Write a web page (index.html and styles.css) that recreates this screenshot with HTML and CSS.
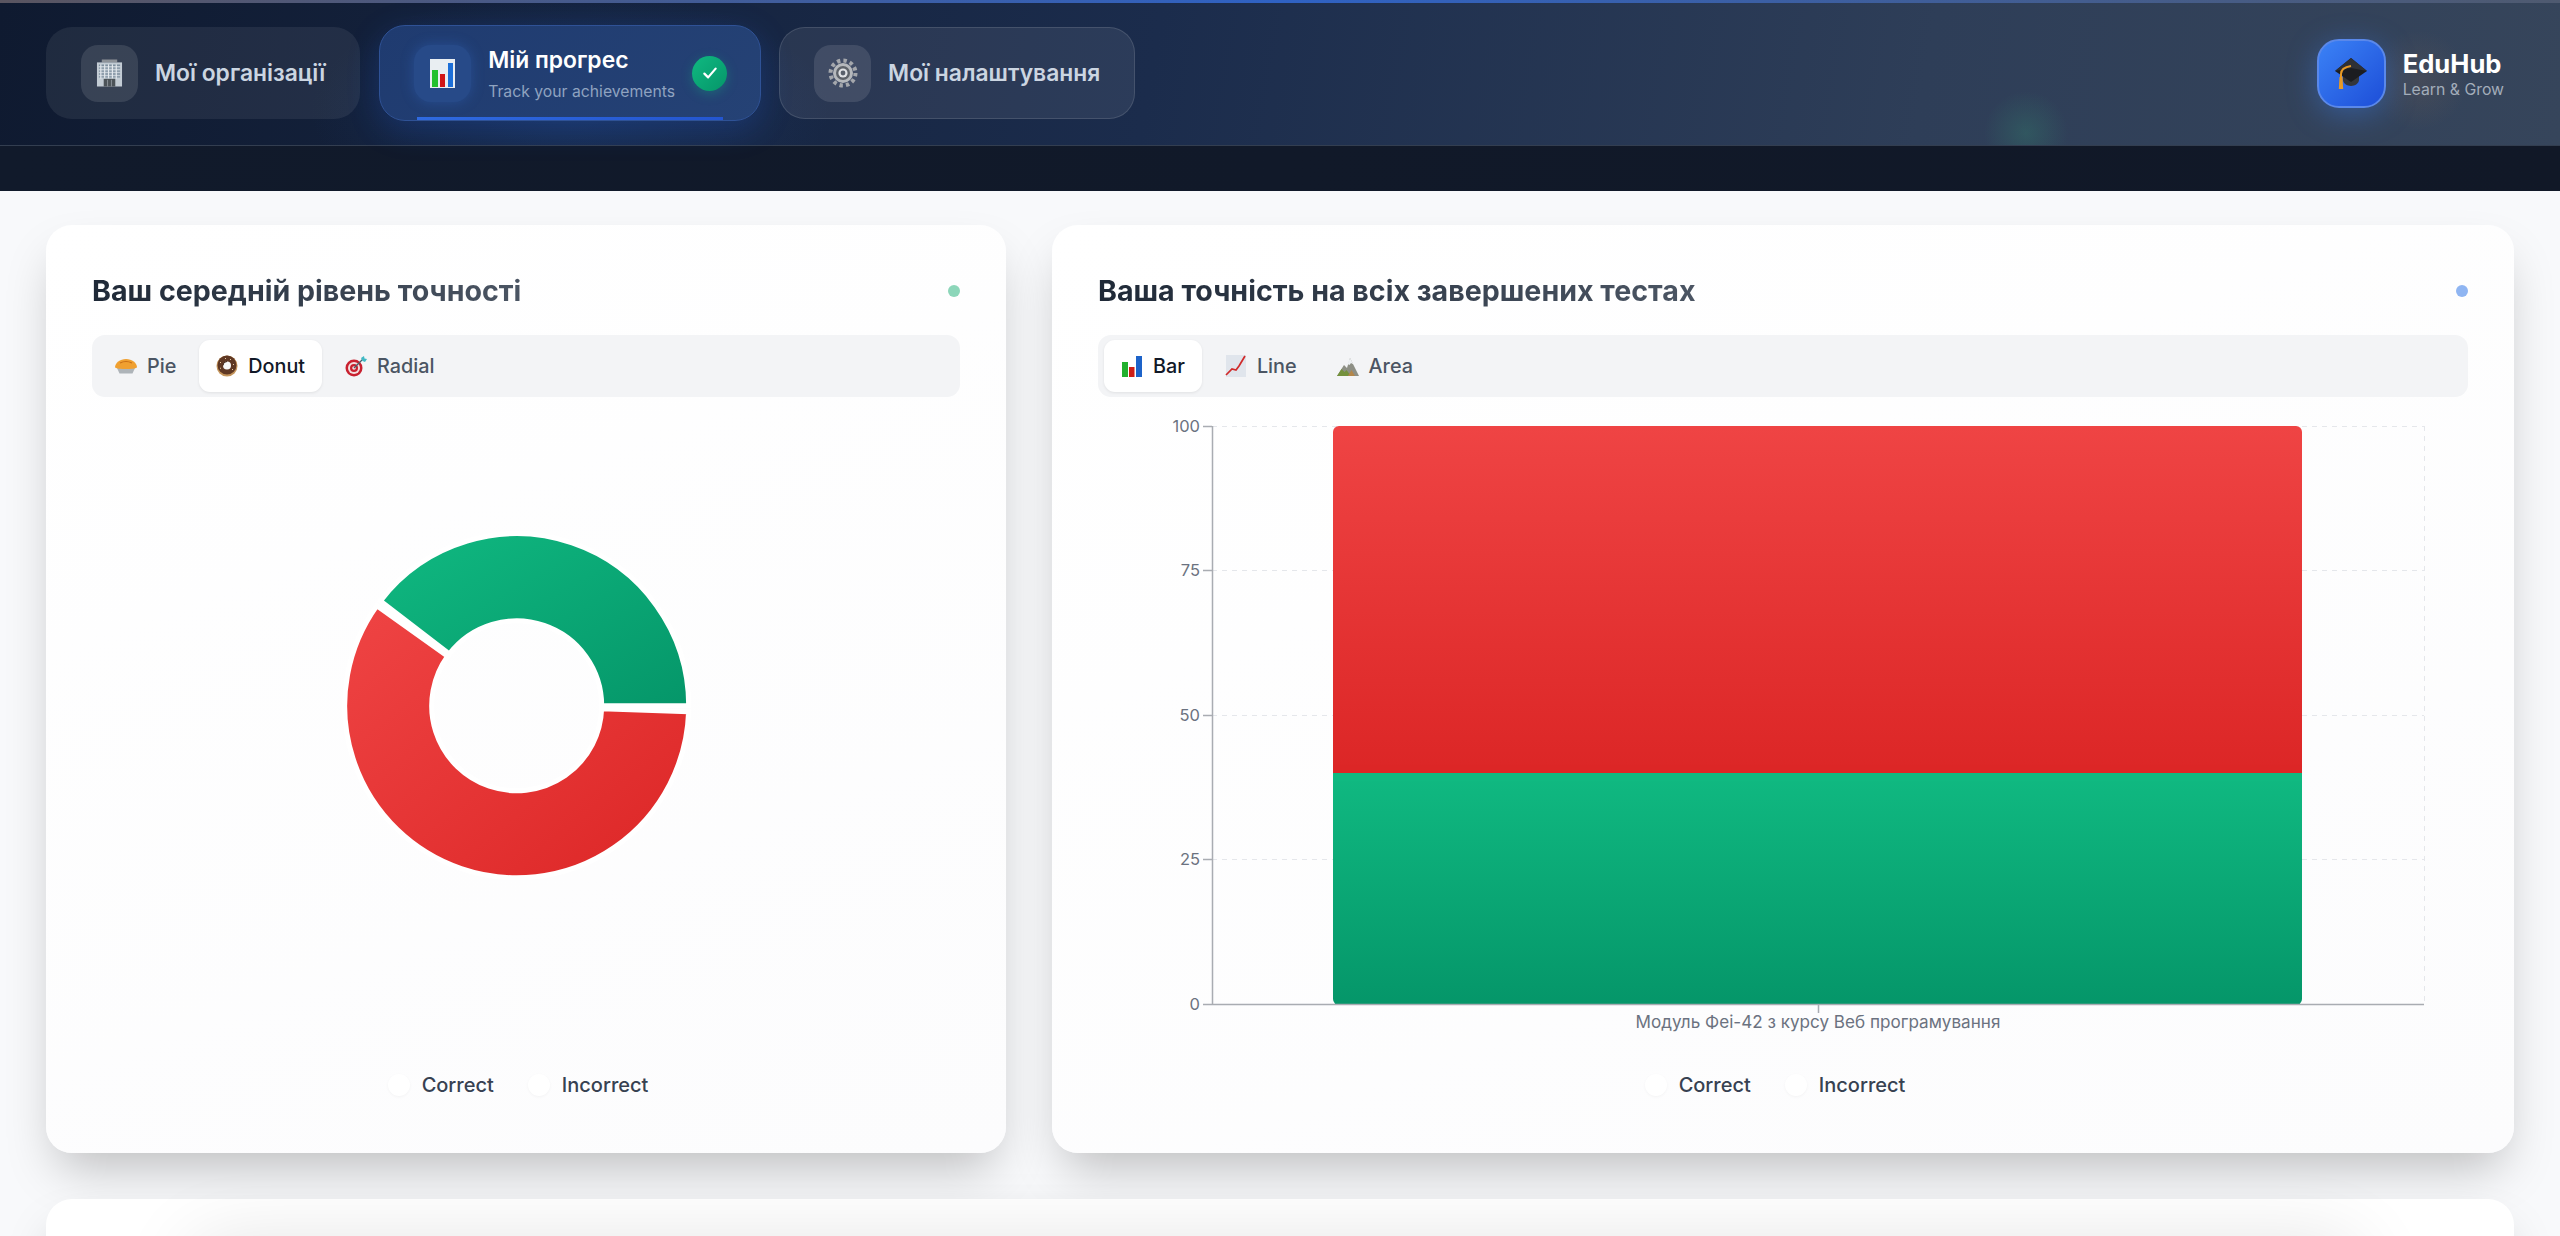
FILE: index.html

```html
<!DOCTYPE html>
<html lang="uk">
<head>
    <meta charset="UTF-8">
    <meta name="viewport" content="width=device-width, initial-scale=1.0">
    <title>EduHub</title>
    <link rel="stylesheet" href="styles.css">
</head>
<body>
    <header class="topbar">
        <nav class="nav">
            <a class="nav-item nav-plain">
                <span class="nav-tile">
                    <svg class="ico-building" viewBox="0 0 28 28">
                        <rect x="6" y="0" width="16" height="3" fill="#8d9298"/>
                        <rect x="1" y="3" width="26" height="25" fill="#c3ccd4"/>
                        <path d="M3 6h22M3 9h22M3 12h22M3 15h22M3 18h22" stroke="#7f8f9e" stroke-width="1.4"/>
                        <path d="M5 5v15M9 5v15M13 5v15M17 5v15M21 5v15" stroke="#e4e9ee" stroke-width="1.2"/>
                        <rect x="8" y="20" width="12" height="8" fill="#4c5358"/>
                        <path d="M12 21v7M16 21v7" stroke="#8b9399" stroke-width="1"/>
                    </svg>
                </span>
                <span class="nav-label">Мої організації</span>
            </a>
            <a class="nav-item nav-active">
                <span class="nav-tile">
                    <svg class="ico-chart" viewBox="0 0 25 29">
                        <rect width="25" height="29" fill="#e9eef2"/>
                        <rect x="2" y="11" width="6" height="17" fill="#22c02e"/>
                        <rect x="10" y="15" width="5" height="13" fill="#d11616"/>
                        <rect x="18" y="4" width="5" height="24" fill="#1d6fd8"/>
                    </svg>
                </span>
                <span class="nav-text">
                    <span class="nav-label">Мій прогрес</span>
                    <span class="nav-sub">Track your achievements</span>
                </span>
                <span class="nav-check">
                    <svg viewBox="0 0 16 16"><path d="M3.5 8.5l3 3 6-7" fill="none" stroke="#fff" stroke-width="1.8" stroke-linecap="round" stroke-linejoin="round"/></svg>
                </span>
                <span class="nav-bar"></span>
            </a>
            <a class="nav-item nav-line">
                <span class="nav-tile">
                    <svg class="ico-gear" viewBox="0 0 30 30">
                        <circle cx="15" cy="15" r="12.5" fill="none" stroke="#a4a7ac" stroke-width="4" stroke-dasharray="3.4 3.15"/>
                        <circle cx="15" cy="15" r="10" fill="#b5b8bc"/>
                        <circle cx="15" cy="15" r="7" fill="#5d6269"/>
                        <circle cx="15" cy="15" r="4.6" fill="#dfe1e4"/>
                        <circle cx="15" cy="15" r="2.4" fill="#59606b"/>
                    </svg>
                </span>
                <span class="nav-label">Мої налаштування</span>
            </a>
        </nav>
        <div class="brand">
            <span class="brand-tile">
                <svg class="ico-cap" viewBox="0 0 32 32">
                    <path d="M8 15v8c0 3 4 6 8 6s8-3 8-6v-8z" fill="#33363b"/>
                    <path d="M16 1l16 13-16 11L0 14z" fill="#1c1d20"/>
                    <path d="M16 1l16 13-16-3-16 3z" fill="#2e3035"/>
                    <path d="M16 9C9 10 6 13 6 17v9" fill="none" stroke="#e79a26" stroke-width="2"/>
                    <path d="M4.5 20h3l.7 12H3.800z" fill="#e79a26"/>
                </svg>
            </span>
            <span class="brand-text">
                <span class="brand-name">EduHub</span>
                <span class="brand-sub">Learn &amp; Grow</span>
            </span>
        </div>
    </header>
    <div class="strip"></div>

    <main class="content">
        <div class="charts">
            <section class="card">
                <div class="card-head">
                    <h2 class="card-title">Ваш середній рівень точності</h2>
                    <span class="dot dot-green"></span>
                </div>
                <div class="tabs">
                    <button class="tab">
                        <svg class="tab-ico" viewBox="0 0 22 22">
                            <path d="M1.500 12h19l-3 6.500h-13z" fill="#aeb4b9"/>
                            <path d="M0 12.500C0 8 5 4 11 4s11 4 11 8.500c-3 2-19 2-22 0z" fill="#f0a030"/>
                            <path d="M5 8c4-2 8-2 12 0" fill="none" stroke="#c96f16" stroke-width="1.200"/>
                        </svg>
                        <span>Pie</span>
                    </button>
                    <button class="tab tab-on">
                        <svg class="tab-ico" viewBox="0 0 22 22">
                            <circle cx="11" cy="11" r="10.500" fill="#c4955c"/>
                            <circle cx="11" cy="10" r="9.500" fill="#5f3824"/>
                            <circle cx="11" cy="10.500" r="4" fill="#f8f8f8"/>
                            <path d="M11 6.500a4 4 0 0 0-4 4" fill="none" stroke="#3d2012" stroke-width="1"/>
                            <path d="M4 7l1 1M9 3l1 1M15 4l-1 1M18 9l-1 1M4 13l1 .5M16 14l1 1" stroke="#e7c9a0" stroke-width="1"/>
                        </svg>
                        <span>Donut</span>
                    </button>
                    <button class="tab">
                        <svg class="tab-ico" viewBox="0 0 22 22">
                            <circle cx="9" cy="13" r="8.500" fill="#c8202f"/>
                            <circle cx="9" cy="13" r="6" fill="#f3dede"/>
                            <circle cx="9" cy="13" r="4" fill="#c8202f"/>
                            <circle cx="9" cy="13" r="1.800" fill="#f3dede"/>
                            <path d="M9 13L18 4" stroke="#47606b" stroke-width="1.300"/>
                            <path d="M16 3l3-2 .5 2.500 2.500.5-2 3-2.500-1z" fill="#3fb8c4"/>
                        </svg>
                        <span>Radial</span>
                    </button>
                </div>
                <svg class="chart" width="868" height="630" viewBox="0 0 868 630">
                    <defs>
                        <linearGradient id="pieGreen" x1="0" y1="0" x2="1" y2="1">
                            <stop offset="0" stop-color="#10b981"/>
                            <stop offset="1" stop-color="#059669"/>
                        </linearGradient>
                        <linearGradient id="pieRed" x1="0" y1="0" x2="1" y2="1">
                            <stop offset="0" stop-color="#ef4444"/>
                            <stop offset="1" stop-color="#dc2626"/>
                        </linearGradient>
                    </defs>
                    <path d="M596.700 295.800A172 172 0 0 0 288.400 190.900L357.400 243.900A85 85 0 0 1 509.700 295.800Z" fill="url(#pieGreen)" stroke="#fff" stroke-width="5"/>
                    <path d="M284.800 195.700A172 172 0 1 0 596.600 301.800L509.650 298.770A85 85 0 1 1 355.600 246.300Z" fill="url(#pieRed)" stroke="#fff" stroke-width="5"/>
                </svg>
                <div class="legend">
                    <span class="legend-item"><i class="legend-dot"></i>Correct</span>
                    <span class="legend-item"><i class="legend-dot"></i>Incorrect</span>
                </div>
            </section>

            <section class="card">
                <div class="card-head">
                    <h2 class="card-title">Ваша точність на всіх завершених тестах</h2>
                    <span class="dot dot-blue"></span>
                </div>
                <div class="tabs">
                    <button class="tab tab-on">
                        <svg class="tab-ico" viewBox="0 0 22 22">
                            <rect x="1" y="7" width="6" height="15" fill="#22b02e"/>
                            <rect x="8" y="12" width="5.500" height="10" fill="#cf1e16"/>
                            <rect x="15" y="1" width="6" height="21" fill="#1d63c9"/>
                        </svg>
                        <span>Bar</span>
                    </button>
                    <button class="tab">
                        <svg class="tab-ico" viewBox="0 0 22 22">
                            <rect x="1" y="0" width="20" height="22" fill="#e0e5ec"/>
                            <path d="M1 20l6-6 4 1 3-4 6-10" fill="none" stroke="#d02a2a" stroke-width="1.700"/>
                        </svg>
                        <span>Line</span>
                    </button>
                    <button class="tab">
                        <svg class="tab-ico" viewBox="0 0 22 22">
                            <path d="M0 21l7-11 3 3 3-10 9 18z" fill="#8d8f85"/>
                            <path d="M10.500 9l2.500-6 3.500 6.500-2.500-1.500-1.500 2z" fill="#eef1f4"/>
                            <path d="M0 21l4.500-7 3 3 2-2 4.500 6z" fill="#74913d"/>
                            <path d="M11 21l3.500-6 3.500 6z" fill="#b3864a"/>
                        </svg>
                        <span>Area</span>
                    </button>
                </div>
                <svg class="chart" width="1370" height="630" viewBox="0 0 1370 630">
                    <defs>
                        <linearGradient id="barRed" x1="0" y1="0" x2="0" y2="1">
                            <stop offset="0" stop-color="#ef4444"/>
                            <stop offset="1" stop-color="#dc2626"/>
                        </linearGradient>
                        <linearGradient id="barGreen" x1="0" y1="0" x2="0" y2="1">
                            <stop offset="0" stop-color="#10b981"/>
                            <stop offset="1" stop-color="#059669"/>
                        </linearGradient>
                    </defs>
                    <path class="grid-line" d="M114 16.500H1326M114 160.500H1326M114 305.500H1326M114 449.500H1326M1326.500 16V594"/>
                    <rect x="235" y="363" width="969" height="232" rx="6" fill="url(#barGreen)"/>
                    <rect x="235" y="16" width="969" height="347" rx="6" fill="url(#barRed)"/>
                    <rect x="235" y="355" width="969" height="8" fill="#dc2626"/>
                    <rect x="235" y="363" width="969" height="8" fill="#10b981"/>
                    <path class="axis-line" d="M114.500 16V595M114 594.500H1326M105 16.500H114M105 160.500H114M105 305.500H114M105 449.500H114M105 594.500H114M720.500 595V603"/>
                    <text class="tick" x="102" y="22">100</text>
                    <text class="tick" x="102" y="166">75</text>
                    <text class="tick" x="102" y="311">50</text>
                    <text class="tick" x="102" y="455">25</text>
                    <text class="tick" x="102" y="600">0</text>
                    <text class="tick-x" x="720" y="618">Модуль Феі-42 з курсу Веб програмування</text>
                </svg>
                <div class="legend">
                    <span class="legend-item"><i class="legend-dot"></i>Correct</span>
                    <span class="legend-item"><i class="legend-dot"></i>Incorrect</span>
                </div>
            </section>
        </div>

        <section class="card card-next">
            <div class="card-next-body"></div>
        </section>
    </main>
</body>
</html>
```

FILE: styles.css

```css
html, body {
    margin: 0;
    padding: 0;
    height: 100%;
    overflow: hidden;
}

body {
    background: #f8f9fb;
    font-family: Inter, "Noto Sans", sans-serif;
}

/* top bar */
.topbar {
    box-sizing: border-box;
    height: 146px;
    padding: 1px 46px 0;
    display: flex;
    justify-content: space-between;
    align-items: center;
    border-bottom: 1px solid #333e50;
    background:
        linear-gradient(90deg, #5a5560, #2f62c4 50%, #4f5a70) top / 100% 3px no-repeat,
        radial-gradient(circle 42px at 2026px 133px, rgba(52, 130, 110, 0.35), transparent),
        radial-gradient(circle 50px at 2418px 80px, rgba(190, 130, 80, 0.12), transparent),
        radial-gradient(ellipse 260px 120px at 570px 110px, rgba(40, 90, 170, 0.25), transparent),
        linear-gradient(100deg, #0f1a30 0%, #1b2c4c 45%, #2e3e58 75%, #36455b 100%);
}

.nav {
    display: flex;
    align-items: center;
    gap: 18px;
}

.nav-item {
    box-sizing: border-box;
    position: relative;
    height: 92px;
    padding: 0 34px;
    display: flex;
    align-items: center;
    gap: 17px;
    border-radius: 26px;
}

.nav-plain {
    padding: 0 35px;
    margin-right: 1px;
    background: rgba(255, 255, 255, 0.07);
}

.nav-line {
    background: rgba(255, 255, 255, 0.08);
    border: 1px solid rgba(255, 255, 255, 0.12);
}

.nav-active {
    height: 96px;
    padding-right: 33px;
    background: linear-gradient(135deg, #1f3b70, #254275);
    border: 1px solid #2f5296;
    box-shadow: 0 8px 32px rgba(37, 99, 235, 0.22);
}

.nav-tile {
    width: 57px;
    height: 57px;
    border-radius: 17px;
    background: rgba(255, 255, 255, 0.11);
    display: flex;
    align-items: center;
    justify-content: center;
    flex-shrink: 0;
}

.nav-active .nav-tile {
    background: #274a88;
    box-shadow: 0 0 14px rgba(59, 130, 246, 0.25);
}

.ico-building {
    width: 27px;
    height: 28px;
}

.ico-chart {
    width: 25px;
    height: 29px;
}

.ico-gear {
    width: 30px;
    height: 30px;
}

.nav-label {
    font-size: 22.85px;
    font-weight: 600;
    color: #cbd5e1;
    white-space: nowrap;
}

.nav-text {
    display: flex;
    flex-direction: column;
    gap: 8px;
}

.nav-active .nav-label {
    color: #fff;
}

.nav-sub {
    font-size: 15.75px;
    color: #8fa3c0;
    white-space: nowrap;
}

.nav-check {
    width: 35px;
    height: 35px;
    border-radius: 50%;
    background: linear-gradient(135deg, #10b981, #059669);
    box-shadow: 0 3px 12px rgba(16, 185, 129, 0.3);
    display: flex;
    align-items: center;
    justify-content: center;
}

.nav-check svg {
    width: 20px;
    height: 20px;
}

.nav-bar {
    position: absolute;
    left: 37px;
    right: 37px;
    bottom: 0;
    height: 3px;
    background: linear-gradient(90deg, #2f6ae0, #2456d0);
}

.brand {
    display: flex;
    align-items: center;
    gap: 17px;
    margin-right: 10px;
}

.brand-tile {
    box-sizing: border-box;
    width: 69px;
    height: 69px;
    border-radius: 22px;
    background: linear-gradient(135deg, #3b82f6, #1d4ed8);
    border: 2px solid #5a88ea;
    box-shadow: 0 6px 30px rgba(59, 130, 246, 0.4);
    display: flex;
    align-items: center;
    justify-content: center;
}

.ico-cap {
    width: 32px;
    height: 32px;
}

.brand-text {
    display: flex;
    flex-direction: column;
    gap: 1px;
}

.brand-name {
    font-size: 25.6px;
    font-weight: 700;
    color: #fff;
}

.brand-sub {
    font-size: 15.8px;
    color: #a3adba;
}

.strip {
    height: 45px;
    background: linear-gradient(90deg, #111a2b, #111827);
}

/* page content */
.content {
    padding: 34px 46px 0;
    display: flex;
    flex-direction: column;
    gap: 46px;
}

.charts {
    display: grid;
    grid-template-columns: 960px 1fr;
    gap: 46px;
}

.card {
    box-sizing: border-box;
    height: 928px;
    padding: 46px;
    border-radius: 26px;
    background: linear-gradient(160deg, #fff, #fcfcfd);
    box-shadow: 0 25px 50px -12px rgba(0, 0, 0, 0.25);
}

.card-head {
    height: 64px;
    display: flex;
    justify-content: space-between;
    align-items: flex-start;
}

.card-title {
    margin: 0;
    font-size: 28.6px;
    line-height: 40px;
    font-weight: 700;
    background: linear-gradient(90deg, #1f2937, #4b5563);
    -webkit-background-clip: text;
    background-clip: text;
    color: transparent;
}

.dot {
    width: 12px;
    height: 12px;
    margin-top: 14px;
    border-radius: 50%;
}

.dot-green {
    background: #8cd6b9;
}

.dot-blue {
    background: #8fb5f2;
}

.tabs {
    height: 62px;
    padding: 5px 6px;
    box-sizing: border-box;
    display: flex;
    gap: 6px;
    border-radius: 13px;
    background: #f3f4f6;
}

.tab {
    padding: 0 17px;
    display: flex;
    align-items: center;
    gap: 10px;
    border: none;
    border-radius: 11px;
    background: none;
    font-family: inherit;
    font-size: 19.8px;
    font-weight: 450;
    color: #4b5563;
}

.tab-on {
    background: #fff;
    color: #111827;
    box-shadow: 0 1px 3px rgba(0, 0, 0, 0.08);
}

.tab-ico {
    width: 22px;
    height: 22px;
}

.chart {
    display: block;
    margin-top: 13px;
}

.grid-line {
    fill: none;
    stroke: #e5e7eb;
    stroke-dasharray: 5 5;
}

.axis-line {
    fill: none;
    stroke: #a9acb2;
    stroke-width: 1.5;
}

.tick {
    font-size: 16.5px;
    fill: #6b7280;
    text-anchor: end;
}

.tick-x {
    font-size: 17.1px;
    fill: #6b7280;
    text-anchor: middle;
}

.legend {
    margin-top: 30px;
    padding-right: 16px;
    height: 30px;
    display: flex;
    justify-content: center;
    gap: 34px;
}

.legend-item {
    display: flex;
    align-items: center;
    gap: 12px;
    font-size: 20px;
    font-weight: 450;
    color: #374151;
}

.legend-dot {
    width: 22px;
    height: 22px;
    border-radius: 50%;
    background: #fff;
    box-shadow: 0 1px 3px rgba(0, 0, 0, 0.04);
}

.card-next {
    height: 300px;
    padding: 45px 160px 0 150px;
    background: #fff;
}

.card-next-body {
    height: 200px;
    background: #eef0f0;
    box-shadow: 0 0 80px rgba(0, 0, 0, 0.12);
}
```
